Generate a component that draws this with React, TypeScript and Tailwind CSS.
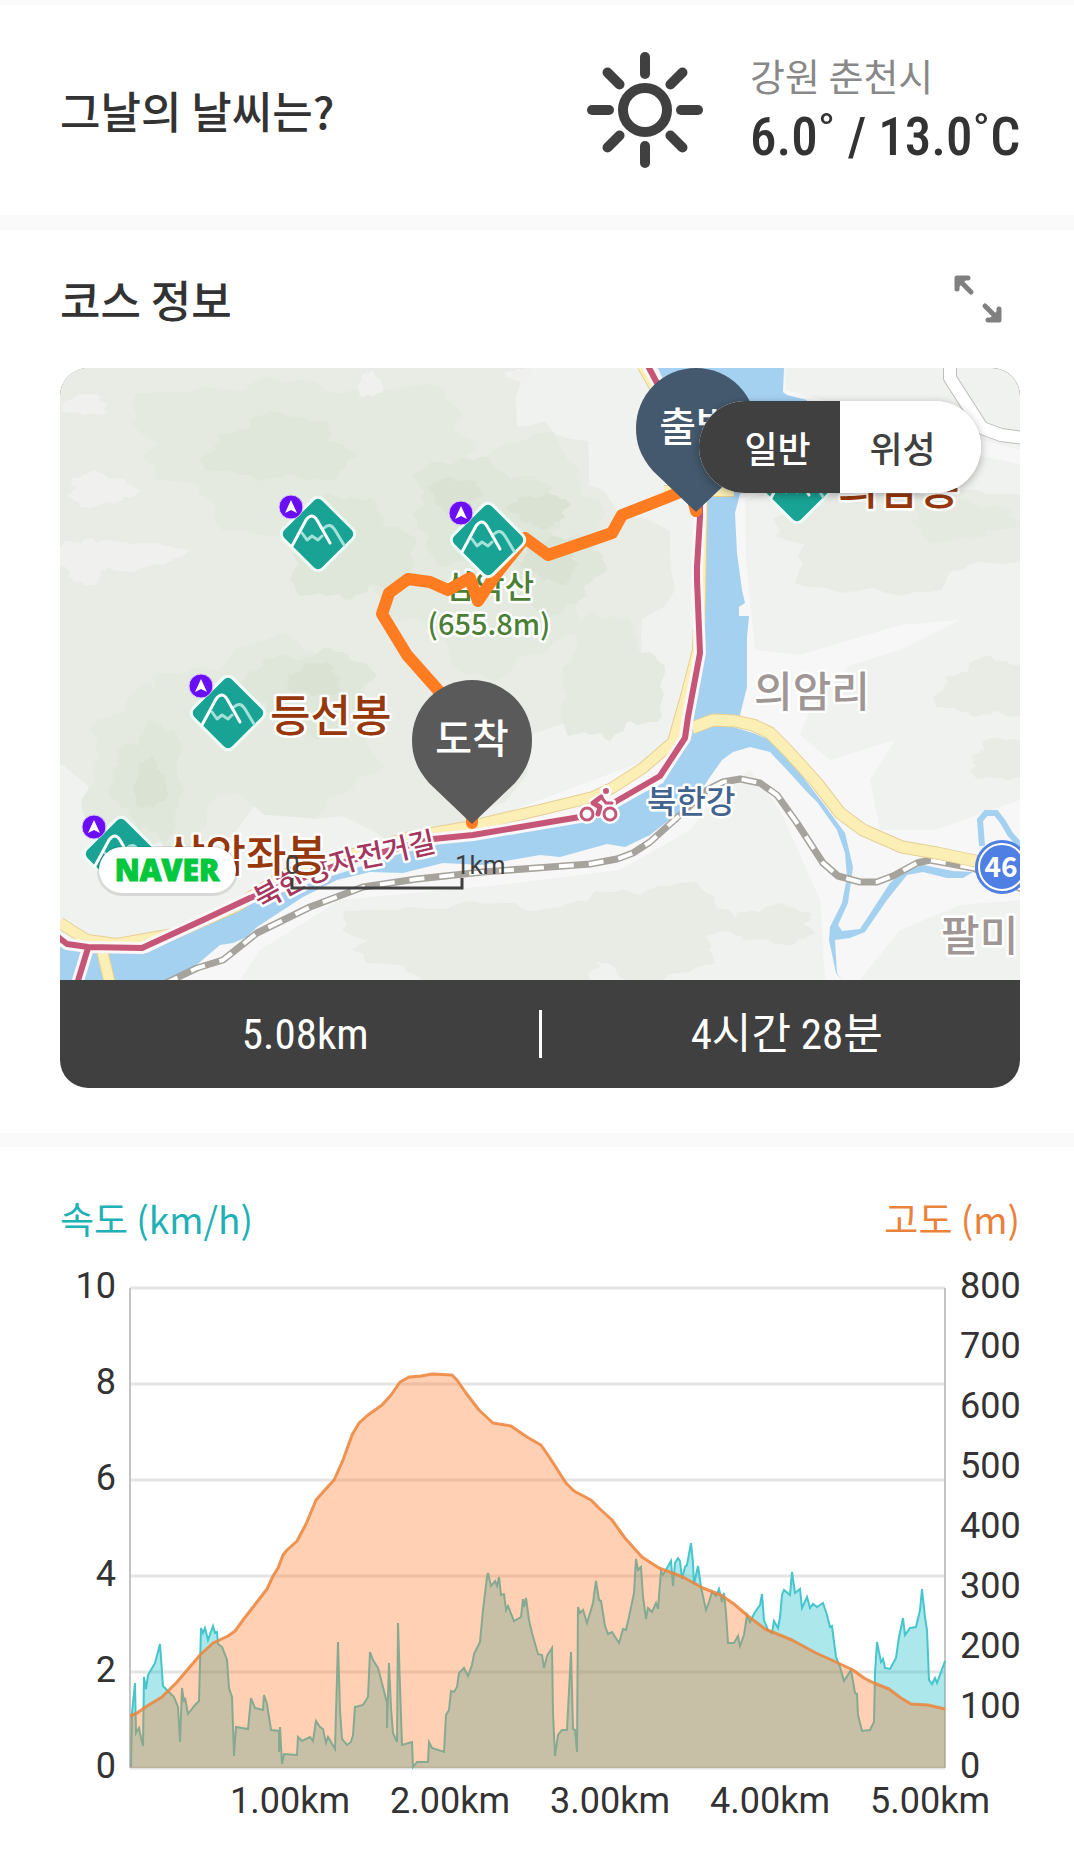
import { useState } from "react";

type Point = [number, number];

const toPoints = (list: Point[]) => list.map((p) => p.join(",")).join(" ");

const speed: Point[] = [
  [131, 1767], [132, 1713], [135, 1683], [136, 1733], [139, 1728], [140, 1733], [143, 1746],
  [144, 1677], [146, 1689], [148, 1675], [155, 1663], [160, 1644], [163, 1686], [168, 1691],
  [174, 1697], [178, 1707], [180, 1742], [182, 1688], [184, 1702], [185, 1698], [188, 1714],
  [195, 1705], [199, 1701], [201, 1628], [203, 1633], [205, 1628], [208, 1640], [213, 1626],
  [215, 1633], [217, 1632], [218, 1644], [222, 1647], [227, 1660], [229, 1688], [232, 1697],
  [234, 1756], [236, 1727], [248, 1729], [251, 1698], [255, 1708], [263, 1710], [264, 1695],
  [267, 1704], [271, 1730], [279, 1731], [279, 1752], [280, 1727], [282, 1764], [284, 1754],
  [297, 1755], [298, 1737], [302, 1741], [310, 1737], [313, 1741], [316, 1721], [320, 1727],
  [323, 1729], [326, 1743], [328, 1737], [335, 1749], [338, 1642], [340, 1710], [342, 1739],
  [347, 1745], [351, 1742], [353, 1735], [355, 1707], [363, 1705], [368, 1697], [370, 1652],
  [373, 1660], [378, 1668], [383, 1687], [387, 1703], [387, 1728], [389, 1663], [391, 1708],
  [393, 1733], [397, 1742], [398, 1623], [400, 1687], [402, 1745], [412, 1742], [413, 1767],
  [417, 1762], [428, 1762], [429, 1742], [432, 1748], [444, 1752], [446, 1715], [449, 1710],
  [451, 1691], [454, 1692], [457, 1687], [459, 1673], [464, 1668], [468, 1676], [472, 1665],
  [474, 1654], [480, 1642], [483, 1610], [487, 1577], [488, 1573], [491, 1586], [495, 1581],
  [497, 1586], [499, 1577], [501, 1595], [504, 1594], [506, 1610], [508, 1606], [514, 1621],
  [521, 1617], [523, 1599], [524, 1607], [526, 1598], [529, 1620], [532, 1633], [538, 1654],
  [542, 1655], [544, 1668], [547, 1656], [552, 1648], [553, 1713], [555, 1756], [558, 1735],
  [562, 1730], [567, 1730], [571, 1652], [573, 1729], [575, 1730], [577, 1752], [578, 1607],
  [580, 1613], [583, 1610], [587, 1623], [593, 1603], [596, 1581], [599, 1600], [601, 1601],
  [605, 1626], [608, 1634], [612, 1632], [619, 1643], [623, 1629], [626, 1630], [629, 1617],
  [634, 1593], [636, 1559], [638, 1570], [641, 1567], [643, 1597], [646, 1619], [648, 1608],
  [652, 1612], [656, 1603], [658, 1609], [661, 1571], [663, 1575], [666, 1570], [671, 1561],
  [673, 1586], [675, 1563], [678, 1558], [680, 1561], [682, 1579], [685, 1567], [687, 1565],
  [691, 1543], [693, 1563], [694, 1584], [696, 1575], [698, 1566], [701, 1587], [706, 1610],
  [709, 1602], [712, 1592], [716, 1596], [719, 1589], [722, 1602], [724, 1593], [726, 1613],
  [728, 1643], [734, 1643], [738, 1636], [740, 1646], [744, 1635], [747, 1615], [750, 1622],
  [755, 1612], [760, 1605], [762, 1594], [764, 1620], [768, 1630], [772, 1633], [774, 1621],
  [778, 1628], [780, 1617], [782, 1595], [784, 1590], [790, 1595], [792, 1572], [795, 1593],
  [800, 1589], [802, 1608], [807, 1597], [810, 1608], [813, 1604], [817, 1607], [823, 1603],
  [827, 1615], [830, 1627], [832, 1626], [836, 1657], [840, 1667], [844, 1681], [851, 1670],
  [855, 1693], [857, 1694], [858, 1715], [862, 1731], [870, 1730], [874, 1722], [875, 1673],
  [877, 1642], [881, 1662], [883, 1659], [885, 1668], [890, 1669], [896, 1658], [899, 1637],
  [903, 1618], [905, 1635], [910, 1628], [916, 1627], [920, 1610], [922, 1589], [925, 1617],
  [927, 1630], [929, 1680], [932, 1684], [935, 1678], [937, 1683], [945, 1661],
];

const altitude: Point[] = [
  [130, 1716], [137, 1713], [147, 1706], [162, 1697], [177, 1682], [200, 1655], [213, 1643],
  [228, 1636], [235, 1631], [243, 1620], [267, 1589], [273, 1576], [278, 1568], [283, 1555],
  [287, 1550], [297, 1541], [306, 1524], [316, 1500], [323, 1492], [334, 1480], [343, 1460],
  [352, 1435], [359, 1423], [368, 1415], [382, 1405], [391, 1395], [400, 1382], [409, 1377],
  [421, 1376], [432, 1374], [452, 1375], [457, 1380], [466, 1393], [479, 1410], [493, 1423],
  [511, 1426], [527, 1437], [541, 1445], [550, 1458], [566, 1483], [574, 1491], [591, 1500],
  [600, 1509], [612, 1520], [625, 1538], [642, 1557], [659, 1568], [683, 1577], [703, 1588],
  [721, 1595], [734, 1604], [748, 1616], [765, 1629], [792, 1640], [816, 1653], [836, 1662],
  [853, 1670], [864, 1678], [874, 1683], [889, 1689], [901, 1698], [911, 1704], [928, 1705],
  [945, 1709],
];

const speedTicks = [10, 8, 6, 4, 2, 0];
const altitudeTicks = [800, 700, 600, 500, 400, 300, 200, 100, 0];
const distanceTicks = [1, 2, 3, 4, 5];

// Jagged contour patch, used for the terrain shading of the map
function contour(cx: number, cy: number, rx: number, ry: number, seed: number) {
  const steps = 60;
  const list: Point[] = [];
  for (let i = 0; i < steps; i++) {
    const a = (i / steps) * Math.PI * 2;
    const wave =
      1 +
      0.14 * Math.sin(a * 3 + seed) +
      0.09 * Math.sin(a * 7 + seed * 2.3) +
      0.05 * Math.sin(i * 1.9 + seed * 5);
    list.push([
      Math.round(cx + Math.cos(a) * rx * wave),
      Math.round(cy + Math.sin(a) * ry * wave),
    ]);
  }
  return toPoints(list);
}

const terrain: { color: string; shapes: [number, number, number, number][] }[] = [
  {
    color: "#e8ece5",
    shapes: [
      [290, 540, 300, 330],
      [500, 570, 150, 160],
      [900, 530, 130, 60],
      [500, 945, 150, 45],
      [640, 930, 90, 45],
      [770, 925, 45, 18],
      [990, 690, 50, 28],
      [1010, 760, 40, 20],
    ],
  },
  {
    color: "#e4eae0",
    shapes: [
      [300, 450, 160, 75],
      [480, 550, 120, 110],
      [250, 730, 130, 80],
      [150, 780, 60, 80],
      [610, 680, 50, 60],
      [960, 520, 50, 20],
    ],
  },
  {
    color: "#dfe7da",
    shapes: [
      [280, 450, 70, 32],
      [350, 550, 60, 50],
      [480, 510, 70, 50],
      [555, 570, 44, 40],
      [310, 690, 60, 40],
      [150, 780, 34, 54],
    ],
  },
  {
    color: "#dae3d3",
    shapes: [
      [455, 495, 24, 18],
      [540, 510, 28, 16],
      [552, 560, 26, 22],
      [315, 680, 26, 16],
      [150, 785, 16, 24],
    ],
  },
  {
    color: "#f0f1ef",
    shapes: [
      [85, 405, 22, 10],
      [370, 385, 12, 12],
      [100, 490, 32, 16],
      [130, 555, 50, 14],
      [85, 560, 26, 22],
      [520, 375, 14, 6],
    ],
  },
];

const riverPath =
  "M658 368H784L783 392L787 395L807 400L800 430L740 494L735 513L737 553L742 590L745 603L739 607V616H749L747 637V687L740 715L733 727L753 733L770 740L787 753L803 777L823 803L845 833L853 867L848 903L838 925L842 931L860 929L890 883L903 872L923 865L953 871L973 872L963 878L947 878L923 872L907 875L887 900L865 932L850 938L835 940L837 973L842 980L836 973L829 940L830 927L842 903L847 877L845 853L837 830L817 802L807 792L787 770L770 752L750 747L733 752L722 760L710 777L700 792L673 817L650 835L625 847L607 844L560 857L540 855L483 865L443 863L403 873L370 872L337 880L303 897L283 910L257 927L247 937L233 943L220 945L193 968L168 980H60V947L97 953H147L250 903L417 848L473 837L550 827L623 803L663 783L692 735L693 718L703 660L705 593L707 494L690 440Z";

const eastRoad =
  "M692 728L713 720L735 721L753 725L770 733L787 750L817 783L840 813L863 830L902 847L937 853L980 862";
const westRoad =
  "M643 366L662 400M664 491H734M702 490L700 600L698 650L685 700L673 742L643 768L612 788L593 797L540 810L467 827L410 837L367 850L283 875L237 906L173 934L117 944L87 940L60 923M102 950L110 984";
const bikeRoad =
  "M648 366L657 383L700 470V517L697 567V580L700 653L688 717L685 738L660 776L615 802L580 817L550 822L473 835L433 839L345 862L250 898L203 920L142 948L88 947L67 944L58 937M88 948L77 984";
const railway =
  "M164 984L197 968L223 960L257 933L310 907L363 887L417 879L483 872L550 867L590 864L617 859L633 853L650 842L680 815L707 790L723 782L740 779L760 783L777 795L797 823L823 863L838 876L860 882H877L893 876L917 863L930 860L973 868L1024 890";
const sideRoad = "M950 364V378L982 428L1001 435L1024 438";
const coursePath =
  "M696 511L690 488L668 497L622 515L612 533L548 555L525 538L497 573L478 601L470 578L448 590L430 582L408 579L389 593L382 614L407 655L438 690L472 740V823";

function MountainMark({ x, y }: { x: number; y: number }) {
  return (
    <g transform={`translate(${x} ${y})`} fill="none" strokeLinecap="round" strokeLinejoin="round">
      <rect
        x="-28"
        y="-28"
        width="56"
        height="56"
        rx="7"
        transform="rotate(45)"
        fill="#19a394"
        stroke="#effaf7"
        strokeWidth="3"
      />
      <path d="M-16 -1L-11 6L-6 2L0 6L4 2M6 -6Q12 -12 17 -4L26 11" stroke="#a3e2d8" strokeWidth="3" />
      <path d="M-26 12L-12 -14Q-6 -22 -1 -14L12 9" stroke="#fff" strokeWidth="3" />
      <circle cx="-27" cy="-27" r="12" fill="#6a0ef5" stroke="#d9c6fb" />
      <path d="M-27 -34L-21 -21L-27 -24L-33 -21Z" fill="#fff" />
    </g>
  );
}

function Pin({ x, y, color, label }: { x: number; y: number; color: string; label: string }) {
  return (
    <g transform={`translate(${x} ${y})`}>
      <path d="M0 84L-43 43C-56 28 -60 15 -60 0A60 60 0 0 1 60 0C60 15 56 28 43 43Z" fill={color} />
      <text y="13" textAnchor="middle" fill="#fff" className="text-[40px] font-medium">
        {label}
      </text>
    </g>
  );
}

function CourseMap() {
  return (
    <svg viewBox="60 368 960 612" className="block w-full" role="img" aria-label="코스 지도">
      <rect x="60" y="368" width="960" height="612" fill="#f0f2ef" />
      {terrain.map((level, i) => (
        <g key={level.color} fill={level.color}>
          {level.shapes.map(([cx, cy, rx, ry], j) => (
            <polygon key={j} points={contour(cx, cy, rx, ry, i * 3 + j)} />
          ))}
        </g>
      ))}

      {/* valley along the river */}
      <path
        d="M784 368L786 390L830 402L1020 450V464L900 440L745 500L746 560L755 650L800 655L850 640L900 625L960 620L900 650L850 665L810 710L800 735L830 760L895 740L870 780L880 830L935 830L1020 800V900L960 905L900 930L860 980H825L820 900L780 810L750 770L720 790L690 830L620 870L500 885L340 900L260 950L240 980H160L220 940L300 890L700 740L735 500L740 400Z"
        fill="#f7f7f7"
      />
      <path d={riverPath} fill="#a5d1f1" />
      <path
        d="M982 846L980 820L986 813H996L1003 822L1010 834L1024 850"
        fill="none"
        stroke="#a5d1f1"
        strokeWidth="6"
      />

      <g fill="none" strokeLinejoin="round">
        <path d={sideRoad} stroke="#bdbdbd" strokeWidth="14" />
        <path d={sideRoad} stroke="#fff" strokeWidth="12" />
        <path d={westRoad} stroke="#e6cf94" strokeWidth="12" />
        <path d={westRoad} stroke="#fcefb6" strokeWidth="10" />
        <path d={railway} stroke="#a6a29c" strokeWidth="7" />
        <path d={railway} stroke="#fff" strokeWidth="4" strokeDasharray="15 15" />
        <path d={eastRoad} stroke="#e6cf94" strokeWidth="13" />
        <path d={eastRoad} stroke="#fcefb6" strokeWidth="11" />
        <path d={bikeRoad} stroke="#fbf6f7" strokeWidth="12" />
        <path d={bikeRoad} stroke="#c65677" strokeWidth="6" />
      </g>

      {/* cyclist */}
      <g fill="none" stroke="#fff" strokeWidth="8" strokeLinecap="round" strokeLinejoin="round">
        <path d="M602 797L593 802L600 806L598 814M602 798L606 803H612" />
        <circle cx="606" cy="791" r="2" />
      </g>
      <g fill="#fff" stroke="#fff" strokeWidth="6">
        <circle cx="587" cy="814" r="7" />
        <circle cx="610" cy="814" r="7" />
      </g>
      <g fill="#fff" stroke="#c65677" strokeWidth="3">
        <circle cx="587" cy="814" r="6" />
        <circle cx="610" cy="814" r="6" />
      </g>
      <g fill="none" stroke="#c65677" strokeWidth="5" strokeLinecap="round" strokeLinejoin="round">
        <path d="M601 797L593 803L600 807L598 814" />
        <path d="M602 798L606 803H612" strokeWidth="3" />
      </g>
      <circle cx="606" cy="791" r="3" fill="#c65677" />

      <g
        className="[font-family:'Noto_Sans_CJK_KR',sans-serif] [paint-order:stroke]"
        stroke="#fff"
        strokeWidth="5"
        strokeLinejoin="round"
      >
        <g fill="#4b7f35" textAnchor="middle" className="font-medium">
          <text x="490" y="598" className="text-[32px]">삼악산</text>
          <text x="489" y="635" className="text-[29px]">(655.8m)</text>
        </g>
        <g fill="#9f9795" className="text-[42px] font-medium">
          <text x="754" y="707">의암리</text>
          <text x="941" y="951">팔미</text>
        </g>
        <text x="647" y="813" fill="#43648f" className="text-[32px] font-medium">
          북한강
        </text>
        <path id="bike-road-name" d="M261 910L300 889Q340 871 375 865L460 846" fill="none" stroke="none" />
        <text fill="#a5375f" className="text-[29px] font-medium">
          <textPath href="#bike-road-name">북한강자전거길</textPath>
        </text>
      </g>

      <path
        d={coursePath}
        fill="none"
        stroke="#ff7c21"
        strokeWidth="12"
        strokeLinecap="round"
        strokeLinejoin="round"
      />

      <MountainMark x={318} y={534} />
      <MountainMark x={488} y={540} />
      <MountainMark x={228} y={713} />
      <MountainMark x={121} y={854} />
      <MountainMark x={797} y={486} />
      <g
        fill="#96380b"
        stroke="#fff"
        strokeWidth="5"
        strokeLinejoin="round"
        className="text-[44px] font-medium [font-family:'Noto_Sans_CJK_KR',sans-serif] [paint-order:stroke]"
      >
        <text x="270" y="732">등선봉</text>
        <text x="165" y="872">삼악좌봉</text>
        <text x="838" y="505">의암봉</text>
      </g>

      <g>
        <circle cx="1002" cy="867" r="27" fill="#4f7fe3" />
        <circle cx="1002" cy="867" r="23" fill="none" stroke="#fff" strokeWidth="2" />
        <text
          x="1001"
          y="877"
          textAnchor="middle"
          fill="#fff"
          className="text-[28px] font-bold [font-family:'Noto_Sans_CJK_KR',sans-serif]"
        >
          46
        </text>
      </g>

      <g className="[font-family:'Noto_Sans_CJK_KR',sans-serif]">
        <Pin x={696} y={428} color="#44596d" label="출발" />
        <Pin x={472} y={740} color="#5a5a5a" label="도착" />
      </g>

      {/* scale bar */}
      <g fill="#404040" className="text-[26px] [font-family:Roboto,sans-serif]">
        <text x="285" y="874">0</text>
        <text x="455" y="874">1km</text>
        <path d="M292 878V888H462V878" fill="none" stroke="#404040" strokeWidth="3" />
      </g>
      <rect x="97" y="846" width="141" height="50" rx="25" fill="#000" opacity="0.1" />
      <rect x="99" y="847" width="137" height="46" rx="23" fill="#fff" />
      <text
        x="167"
        y="881"
        textAnchor="middle"
        fill="#03c73c"
        stroke="#03c73c"
        strokeWidth="1"
        className="text-[30px] font-extrabold [font-family:'Open_Sans',sans-serif]"
      >
        NAVER
      </text>
    </svg>
  );
}

function TrackChart() {
  const speedLine = toPoints(speed);
  const altitudeLine = toPoints(altitude);

  return (
    <svg viewBox="60 1250 960 576" className="block w-full" role="img" aria-label="속도와 고도 그래프">
      {speedTicks.map((tick) => (
        <path key={tick} d={`M130 ${1768 - tick * 48}H945`} stroke="#e4e4e4" strokeWidth="3" />
      ))}
      <path d="M130 1288V1768M945 1288V1768" stroke="#c4c4c4" strokeWidth="2" />
      <polygon points={`130,1768 ${speedLine} 945,1768`} fill="#21bfcb" fillOpacity="0.38" />
      <polyline points={speedLine} fill="none" stroke="#45c6cc" strokeWidth="2" />
      <polygon points={`130,1768 ${altitudeLine} 945,1768`} fill="#ff7723" fillOpacity="0.345" />
      <polyline
        points={altitudeLine}
        fill="none"
        stroke="#ec8439"
        strokeOpacity="0.85"
        strokeWidth="3"
        strokeLinejoin="round"
      />

      <g fill="#333" className="text-[36px] [font-family:Roboto,sans-serif]">
        {speedTicks.map((tick) => (
          <text key={tick} x="116" y={1298 + (10 - tick) * 48} textAnchor="end">
            {tick}
          </text>
        ))}
        {altitudeTicks.map((tick, i) => (
          <text key={tick} x="960" y={1298 + i * 60}>
            {tick}
          </text>
        ))}
        {distanceTicks.map((km) => (
          <text key={km} x={130 + km * 160} y="1813" textAnchor="middle">
            {km.toFixed(2)}km
          </text>
        ))}
      </g>
    </svg>
  );
}

function SunIcon() {
  return (
    <svg viewBox="-60 -60 120 120" className="size-[120px]" aria-hidden="true">
      <circle r="22" fill="none" stroke="#404040" strokeWidth="10" />
      {[0, 45, 90, 135, 180, 225, 270, 315].map((deg) => (
        <path
          key={deg}
          d="M0 -36V-53"
          transform={`rotate(${deg})`}
          stroke="#404040"
          strokeWidth="10"
          strokeLinecap="round"
        />
      ))}
    </svg>
  );
}

function ExpandIcon() {
  return (
    <svg
      viewBox="0 0 48 48"
      className="size-[48px]"
      fill="#808080"
      stroke="#808080"
      strokeWidth="5"
      strokeLinecap="round"
      strokeLinejoin="round"
      aria-hidden="true"
    >
      <path d="M3 14V3H14M4 4L17 17" fill="none" />
      <path d="M45 34V45H34M44 44L31 31" fill="none" />
      <path d="M3 3H14L3 14ZM45 45H34L45 34Z" stroke="none" />
    </svg>
  );
}

function App() {
  const [mapType, setMapType] = useState<"normal" | "satellite">("normal");

  return (
    <main className="min-w-[720px] bg-white text-[#333] [font-family:'Noto_Sans_CJK_KR',sans-serif]">
      <div className="h-[5px] bg-[#fafafa]" />

      {/* Weather */}
      <section className="flex h-[210px] items-center justify-between pr-[54px] pl-[60px]">
        <h2 className="text-[44px] font-medium">그날의 날씨는?</h2>
        <div className="flex items-center gap-[45px]">
          <SunIcon />
          <div className="w-[270px] whitespace-nowrap">
            <p className="text-[38px] leading-[50px] text-[#888]">강원 춘천시</p>
            <p className="mt-1 text-[53px] leading-[66px] font-medium [font-family:'Roboto_Condensed','Liberation_Sans_Narrow',Roboto,sans-serif]">
              6.0˚ / 13.0˚C
            </p>
          </div>
        </div>
      </section>
      <div className="h-[15px] bg-[#fafafa]" />

      {/* Course */}
      <section className="pr-[54px] pb-[45px] pl-[60px]">
        <div className="flex h-[138px] items-center justify-between pr-[18px]">
          <h2 className="text-[44px] font-medium">코스 정보</h2>
          <button type="button" aria-label="지도 확대">
            <ExpandIcon />
          </button>
        </div>
        <div className="relative overflow-hidden rounded-[28px] bg-[#404040]">
          <CourseMap />
          <div className="absolute top-[33px] right-[39px] flex h-[92px] w-[282px] overflow-hidden rounded-full bg-white text-[36px] font-medium shadow-[0_2px_8px_rgba(0,0,0,0.3)]">
            <button
              type="button"
              aria-pressed={mapType === "normal"}
              onClick={() => setMapType("normal")}
              className={
                mapType === "normal"
                  ? "flex-1 bg-[#404040] pl-4 text-white"
                  : "flex-1 bg-white pl-4 text-[#404040]"
              }
            >
              일반
            </button>
            <button
              type="button"
              aria-pressed={mapType === "satellite"}
              onClick={() => setMapType("satellite")}
              className={
                mapType === "satellite"
                  ? "flex-1 bg-[#404040] pr-4 text-white"
                  : "flex-1 bg-white pr-4 text-[#404040]"
              }
            >
              위성
            </button>
          </div>
          <div className="flex h-[108px] items-center text-center text-[43px] text-white [font-family:'Roboto_Condensed','Noto_Sans_CJK_KR',sans-serif]">
            <p className="flex-1 pl-3">5.08km</p>
            <div className="h-[48px] w-[3px] bg-white" />
            <p className="flex-1 pl-3">4시간 28분</p>
          </div>
        </div>
      </section>
      <div className="h-[14px] bg-[#fafafa]" />

      {/* Speed and altitude */}
      <section className="pt-[46px] pr-[54px] pb-[23px] pl-[60px]">
        <div className="flex justify-between text-[37px] leading-[50px]">
          <h3 className="text-[#1fb1b8]">속도 (km/h)</h3>
          <h3 className="text-[#e8823c]">고도 (m)</h3>
        </div>
        <div className="pt-[7px]">
          <TrackChart />
        </div>
      </section>
    </main>
  );
}

export default App;
